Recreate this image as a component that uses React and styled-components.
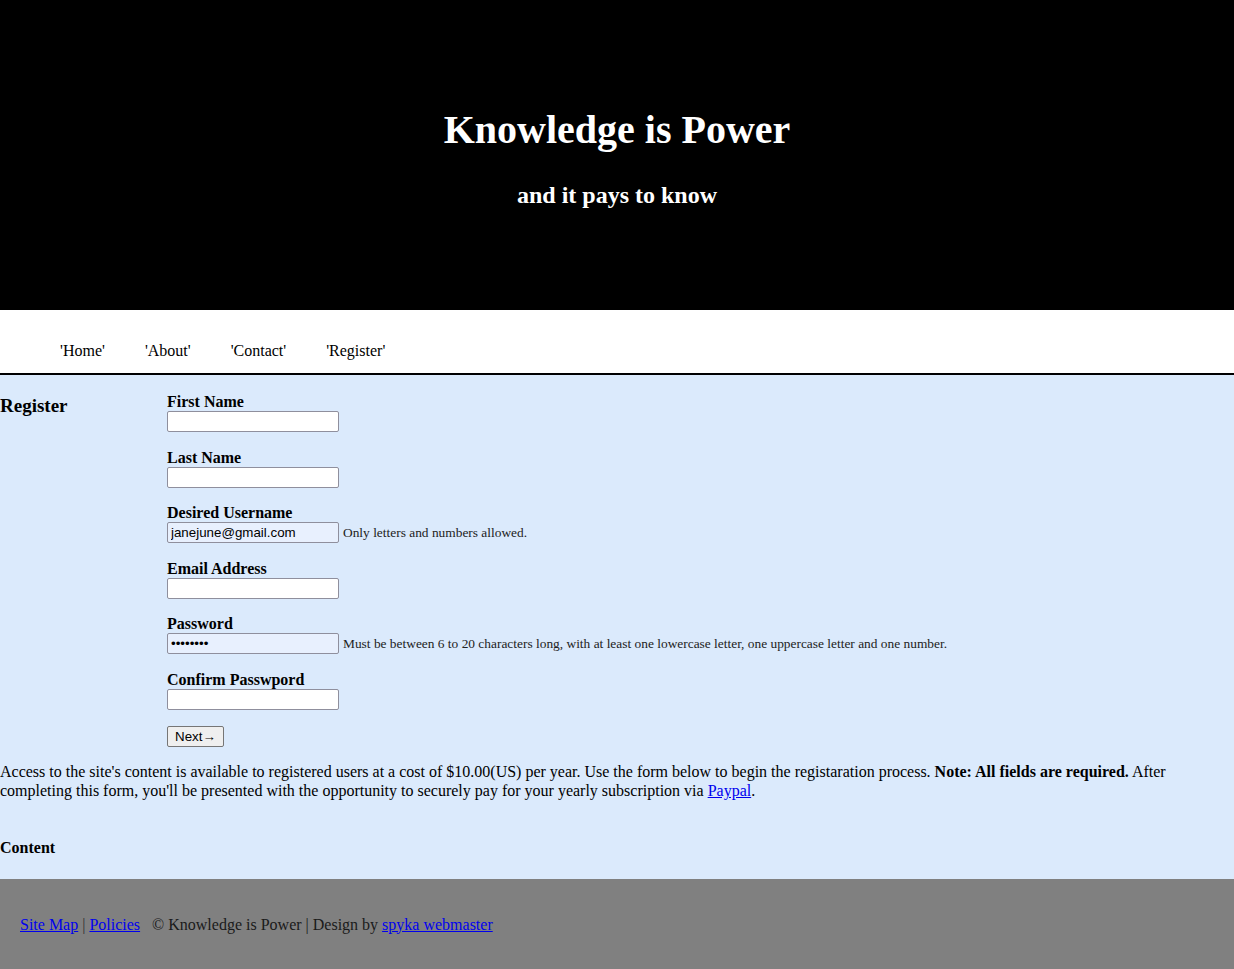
import React from "react";
import styled, { createGlobalStyle } from "styled-components";

const GlobalStyle = createGlobalStyle`
  html, body {
    margin: 0;
    padding: 0;
  }
  body {
    font-family: "Liberation Serif", "Times New Roman", serif;
    font-size: 16px;
    color: #000;
    background: #808080;
  }
  a {
    color: #0000ee;
  }
`;

const Masthead = styled.header`
  background: #000;
  color: #fff;
  height: 310px;
  display: flex;
  flex-direction: column;
  align-items: center;
  padding-top: 106px;
  box-sizing: border-box;
`;

const Title = styled.h1`
  margin: 0;
  font-size: 40px;
  line-height: 48px;
  font-weight: bold;
`;

const Tagline = styled.h2`
  margin: 27px 0 0;
  font-size: 24px;
  line-height: 28px;
  font-weight: bold;
`;

const Nav = styled.nav`
  background: #fff;
  height: 65px;
  border-bottom: 2px solid #000;
  display: flex;
  align-items: center;
  padding: 18px 0 0 60px;
  box-sizing: border-box;
  gap: 40px;
`;

const NavItem = styled.span`
  font-size: 16px;
  color: #000;
`;

const Main = styled.main`
  background: #dbeafc;
  padding: 18px 0 22px;
`;

const RegisterRow = styled.div`
  display: flex;
`;

const SectionTitle = styled.h3`
  margin: 2px 0 0;
  width: 167px;
  font-size: 19px;
  font-weight: bold;
`;

const Form = styled.form`
  display: flex;
  flex-direction: column;
`;

const Field = styled.div`
  margin-bottom: 16.5px;
`;

const Label = styled.label`
  display: block;
  font-weight: bold;
  font-size: 16px;
  line-height: 18px;
`;

const InputRow = styled.div`
  display: flex;
  align-items: center;
`;

const Input = styled.input`
  width: 172px;
  height: 21px;
  box-sizing: border-box;
  border: 1px solid #8f8f9d;
  border-radius: 2px;
  background: ${p => (p.$filled ? "#e8f0fe" : "#fff")};
  font-family: "Liberation Sans", Arial, sans-serif;
  font-size: 13.33px;
  padding: 0 3px;
  color: #000;
  margin: 0;
`;

const Hint = styled.span`
  font-size: 13.4px;
  margin-left: 4px;
  color: #222;
`;

const Button = styled.button`
  align-self: flex-start;
  height: 21px;
  padding: 0 7px;
  font-family: "Liberation Sans", Arial, sans-serif;
  font-size: 13.33px;
  background: #efefef;
  border: 1px solid #767676;
  border-radius: 2px;
  color: #000;
`;

const Intro = styled.p`
  margin: 15px 0 0;
  font-size: 16px;
  line-height: 19px;
`;

const ContentLabel = styled.h4`
  margin: 39px 0 0;
  font-size: 16px;
  font-weight: bold;
`;

const Footer = styled.footer`
  background: #808080;
  height: 91px;
  display: flex;
  align-items: center;
  padding: 0 0 0 20px;
  box-sizing: border-box;
  font-size: 16px;
  color: #1a1a1a;
`;

const Sep = styled.span`
  margin: 0 4px;
  color: #333;
`;

const Credit = styled.span`
  margin-left: 12px;
`;

const fields = [
  { label: "First Name" },
  { label: "Last Name" },
  {
    label: "Desired Username",
    value: "janejune@gmail.com",
    hint: "Only letters and numbers allowed."
  },
  { label: "Email Address" },
  {
    label: "Password",
    type: "password",
    value: "********",
    hint:
      "Must be between 6 to 20 characters long, with at least one lowercase letter, one uppercase letter and one number."
  },
  { label: "Confirm Passwpord", type: "password" }
];

const App = () => {
  return (
    <>
      <GlobalStyle />
      <Masthead>
        <Title>Knowledge is Power</Title>
        <Tagline>and it pays to know</Tagline>
      </Masthead>
      <Nav>
        <NavItem>'Home'</NavItem>
        <NavItem>'About'</NavItem>
        <NavItem>'Contact'</NavItem>
        <NavItem>'Register'</NavItem>
      </Nav>
      <Main>
        <RegisterRow>
          <SectionTitle>Register</SectionTitle>
          <Form onSubmit={e => e.preventDefault()}>
            {fields.map(f => (
              <Field key={f.label}>
                <Label>{f.label}</Label>
                <InputRow>
                  <Input
                    type={f.type || "text"}
                    defaultValue={f.value || ""}
                    $filled={!!f.value}
                  />
                  {f.hint && <Hint>{f.hint}</Hint>}
                </InputRow>
              </Field>
            ))}
            <Button type="submit">Next&#8594;</Button>
          </Form>
        </RegisterRow>
        <Intro>
          Access to the site's content is available to registered users at a
          cost of $10.00(US) per year. Use the form below to begin the
          registaration process. <b>Note: All fields are required.</b> After
          completing this form, you'll be presented with the opportunity to
          securely pay for your yearly subscription via <a href="#">Paypal</a>.
        </Intro>
        <ContentLabel>Content</ContentLabel>
      </Main>
      <Footer>
        <a href="#">Site Map</a>
        <Sep>|</Sep>
        <a href="#">Policies</a>
        <Credit>
          © Knowledge is Power | Design by <a href="#">spyka webmaster</a>
        </Credit>
      </Footer>
    </>
  );
};

export default App;
